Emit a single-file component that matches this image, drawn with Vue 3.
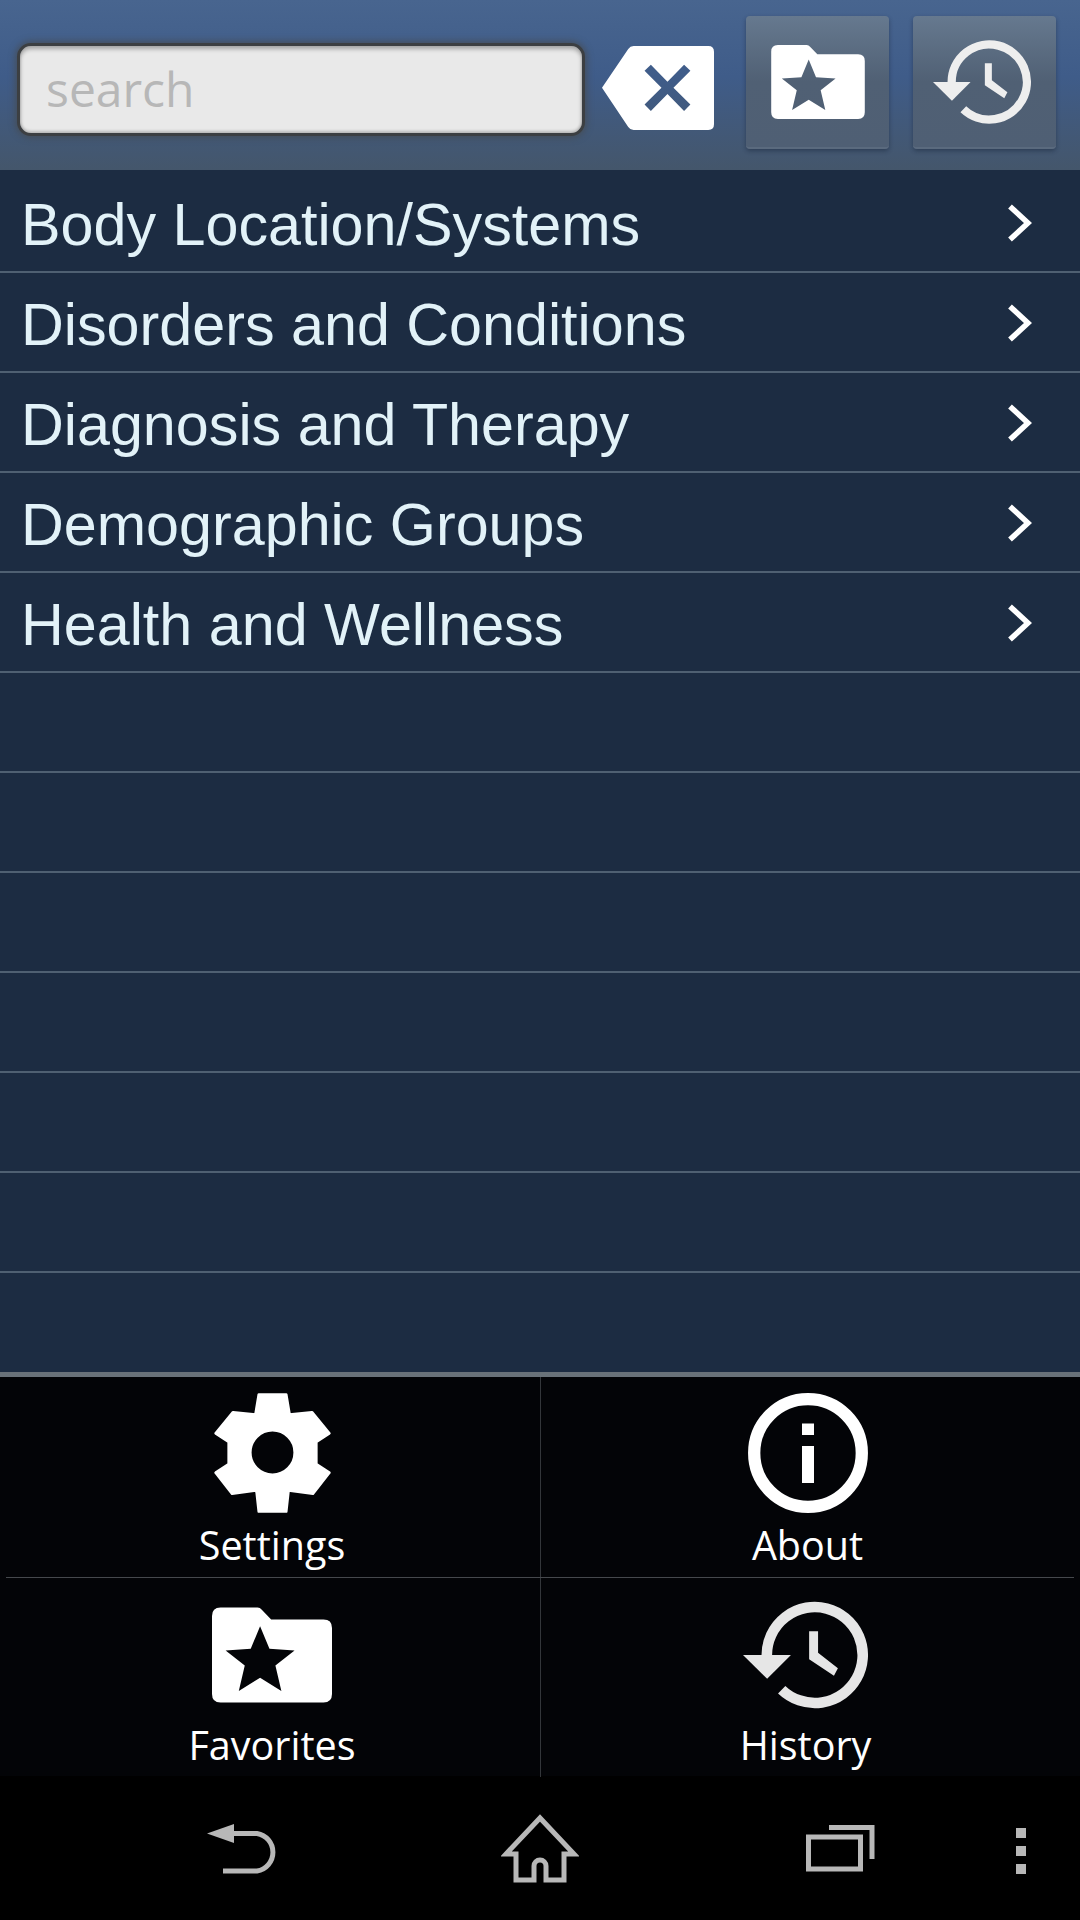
<script setup>
const topics = [
  'Body Location/Systems',
  'Disorders and Conditions',
  'Diagnosis and Therapy',
  'Demographic Groups',
  'Health and Wellness',
  '', '', '', '', '', '', '',
];

const folderPath =
  'M593 134H680Q686 134 690 139L712 162H835Q855 162 855 182V337Q855 357 835 357H593Q573 357 573 337V154Q573 134 593 134Z' +
  'M686 178L664 231L605 235L650 270L636 330L686 299L736 330L722 270L767 235L708 231Z';
const handsPath = 'M265 123H292V188L352 235L340 258L265 208Z';
</script>

<template>
  <div class="screen">
    <header class="topbar">
      <div class="search"><span class="placeholder">search</span></div>
      <svg class="del" viewBox="65 138 337 252">
        <path
          fill="#fff"
          fill-rule="evenodd"
          d="M160 138H385Q402 138 402 155V373Q402 390 385 390H160Q150 390 144 381L65 263L144 147Q150 138 160 138Z
             M193 212L244 263L193 314L212 333L262 282L312 333L331 314L280 263L331 212L312 194L262 245L212 194Z"
        />
      </svg>
      <button class="tool tool-fav">
        <svg class="fav-icon" viewBox="573 134 282 223">
          <path fill="#fff" fill-rule="evenodd" :d="folderPath" />
        </svg>
      </button>
      <button class="tool tool-hist">
        <svg class="hist-icon" viewBox="65 33 378 324">
          <path d="M182 300A145 145 0 1 0 137 195" fill="none" stroke="#eee" stroke-width="32" />
          <path d="M65 195H210L138 267Z" fill="#eee" />
          <path :d="handsPath" fill="#eee" />
        </svg>
      </button>
    </header>

    <ul class="list">
      <li v-for="(topic, i) in topics" :key="i" class="row">
        <span class="row-text">{{ topic }}</span>
        <svg v-if="topic" class="chevron" viewBox="0 0 24 38">
          <path d="M2 2.500L20 19L2 35.500" fill="none" stroke="#fff" stroke-width="5.500" />
        </svg>
      </li>
    </ul>

    <section class="menu">
      <div class="cell cell-top cell-left">
        <div class="cell-icon">
          <svg class="gear" viewBox="100 40 350 358">
            <path
              fill="#fff"
              stroke="#fff"
              stroke-width="8"
              stroke-linejoin="round"
              fill-rule="evenodd"
              d="M234 44H316L326 104L393 97L445 160L406 186V252L445 278L396 341L323 331L316 394H234L227 331L154 341L105 278L144 252V186L105 160L157 97L224 104Z
                 M275 151A66 66 0 1 0 275 284A66 66 0 1 0 275 151Z"
            />
          </svg>
        </div>
        <span class="cell-label">Settings</span>
      </div>
      <div class="cell cell-top cell-right">
        <div class="cell-icon">
          <svg class="info" viewBox="0 0 120 120">
            <circle cx="60" cy="60" r="53.800" fill="none" stroke="#fff" stroke-width="12.300" />
            <rect x="54" y="30.500" width="12" height="11.500" fill="#fff" />
            <rect x="54" y="53" width="12" height="37" fill="#fff" />
          </svg>
        </div>
        <span class="cell-label">About</span>
      </div>
      <div class="cell cell-left">
        <div class="cell-icon">
          <svg class="fav-big" viewBox="573 134 282 223">
            <path fill="#fff" fill-rule="evenodd" :d="folderPath" />
          </svg>
        </div>
        <span class="cell-label">Favorites</span>
      </div>
      <div class="cell cell-right cell-history">
        <div class="cell-icon">
          <svg class="hist-big" viewBox="65 33 378 324">
            <path d="M182 300A145 145 0 1 0 137 195" fill="none" stroke="#e6e6e6" stroke-width="32" />
            <path d="M65 195H210L138 267Z" fill="#e6e6e6" />
            <path :d="handsPath" fill="#e6e6e6" />
          </svg>
        </div>
        <span class="cell-label">History</span>
      </div>
    </section>

    <nav class="navbar">
      <svg class="nav-back" viewBox="0 0 70 50">
        <path d="M27 0V19L0 9.500Z" fill="#b8b8b8" />
        <path d="M25 9.500H50A19 19 0 0 1 50 47H16" fill="none" stroke="#b8b8b8" stroke-width="5" />
      </svg>
      <svg class="nav-home" viewBox="0 0 78 70">
        <path
          d="M15 40H5L39 4L73 40H63V66H45V52A6 6 0 0 0 33 52V66H15Z"
          fill="none"
          stroke="#b8b8b8"
          stroke-width="5"
        />
      </svg>
      <svg class="nav-recent" viewBox="0 0 70 47">
        <rect x="2.500" y="12" width="52" height="32" fill="none" stroke="#b8b8b8" stroke-width="5" />
        <path d="M23 2.500H66V34" fill="none" stroke="#b8b8b8" stroke-width="5" />
      </svg>
      <div class="nav-dots">
        <span></span>
        <span></span>
        <span></span>
      </div>
    </nav>
  </div>
</template>

<style>
html,
body {
  margin: 0;
  background: #000;
}
</style>

<style scoped>
.screen {
  width: 1080px;
  height: 1920px;
  display: flex;
  flex-direction: column;
  overflow: hidden;
  background: #1c2c42;
}

/* верхняя панель */
.topbar {
  height: 170px;
  flex-shrink: 0;
  display: flex;
  align-items: flex-start;
  box-sizing: border-box;
  padding-left: 17px;
  background: linear-gradient(#48658f 0%, #3f5c89 45%, #44566b 100%);
}

.search {
  width: 568px;
  height: 93px;
  margin-top: 43px;
  box-sizing: border-box;
  border: 3px solid #3c3f42;
  border-radius: 14px;
  background: #e9e9e9;
  box-shadow: 0 0 6px 2px rgba(70, 75, 80, 0.75), inset 0 3px 4px rgba(0, 0, 0, 0.3), inset 0 -2px 3px rgba(0, 0, 0, 0.2);
  padding: 0 0 2px 26px;
  display: flex;
  align-items: center;
}

.placeholder {
  font: 48px/1 'Open Sans', sans-serif;
  color: #b7b7b7;
}

.del {
  width: 112px;
  height: 84px;
  margin: 46px 0 0 17px;
}

.tool {
  width: 143px;
  height: 133px;
  margin-top: 16px;
  padding: 0;
  border: 0;
  border-bottom: 2px solid #5a6a7e;
  border-radius: 4px;
  background: linear-gradient(#66798f 0%, #506074 50%, #4f5f74 100%);
  box-shadow: 0 2px 4px rgba(20, 30, 50, 0.45);
  display: flex;
  align-items: flex-start;
}

.tool-fav {
  margin-left: 32px;
}

.tool-hist {
  margin-left: 24px;
}

.fav-icon {
  width: 94px;
  height: 74px;
  margin: 29px 0 0 25px;
}

.hist-icon {
  width: 98px;
  height: 84px;
  margin: 24px 0 0 20px;
}

/* список */
.list {
  list-style: none;
  margin: 0;
  padding: 3px 0 0;
}

.row {
  height: 100px;
  box-sizing: border-box;
  display: flex;
  align-items: center;
  justify-content: space-between;
  padding: 2px 48px 0 21px;
  border-bottom: 2px solid #4f6072;
}

.row:last-child {
  height: 99px;
  border-bottom: 0;
}

.row-text {
  font: 59.250px/1 'Liberation Sans', Arial, sans-serif;
  color: #e2f2f8;
  padding-top: 3px;
}

.chevron {
  width: 24px;
  height: 38px;
}

/* нижнее меню */
.menu {
  height: 404px;
  flex-shrink: 0;
  box-sizing: border-box;
  display: grid;
  grid-template-columns: 540px 540px;
  grid-template-rows: 201px 199px;
  border-top: 5px solid #697279;
  background: #030407;
  position: relative;
}

.menu::after {
  content: '';
  position: absolute;
  left: 6px;
  right: 6px;
  top: 200px;
  height: 1px;
  background: #45484c;
}

.cell {
  display: flex;
  flex-direction: column;
  align-items: center;
  padding-top: 17px;
  box-sizing: border-box;
}

.cell-top {
  padding-top: 16px;
}

.cell-left {
  padding-left: 4px;
}

.cell-right {
  border-left: 1px solid #33363a;
  padding-right: 6px;
}

.cell-history {
  padding-right: 10px;
}

.cell-icon {
  height: 120px;
  display: flex;
  align-items: center;
}

.cell-label {
  font: 39.500px/50px 'Open Sans', sans-serif;
  color: #fff;
  margin-top: 5px;
}

.cell-top .cell-label {
  margin-top: 7px;
}

.gear {
  width: 117px;
  height: 120px;
}

.info {
  width: 120px;
  height: 120px;
}

.fav-big {
  width: 120px;
  height: 96px;
}

.hist-big {
  width: 125px;
  height: 108px;
}

/* системная панель */
.navbar {
  flex: 1;
  display: flex;
  align-items: flex-start;
  background: #000;
  padding-left: 207px;
}

.nav-back {
  width: 70px;
  height: 50px;
  margin-top: 48px;
}

.nav-home {
  width: 78px;
  height: 70px;
  margin: 38px 0 0 224px;
}

.nav-recent {
  width: 70px;
  height: 47px;
  margin: 49px 0 0 227px;
}

.nav-dots {
  margin: 52px 0 0 140px;
  display: flex;
  flex-direction: column;
  gap: 8px;
}

.nav-dots span {
  width: 10px;
  height: 10px;
  background: #b8b8b8;
}
</style>
